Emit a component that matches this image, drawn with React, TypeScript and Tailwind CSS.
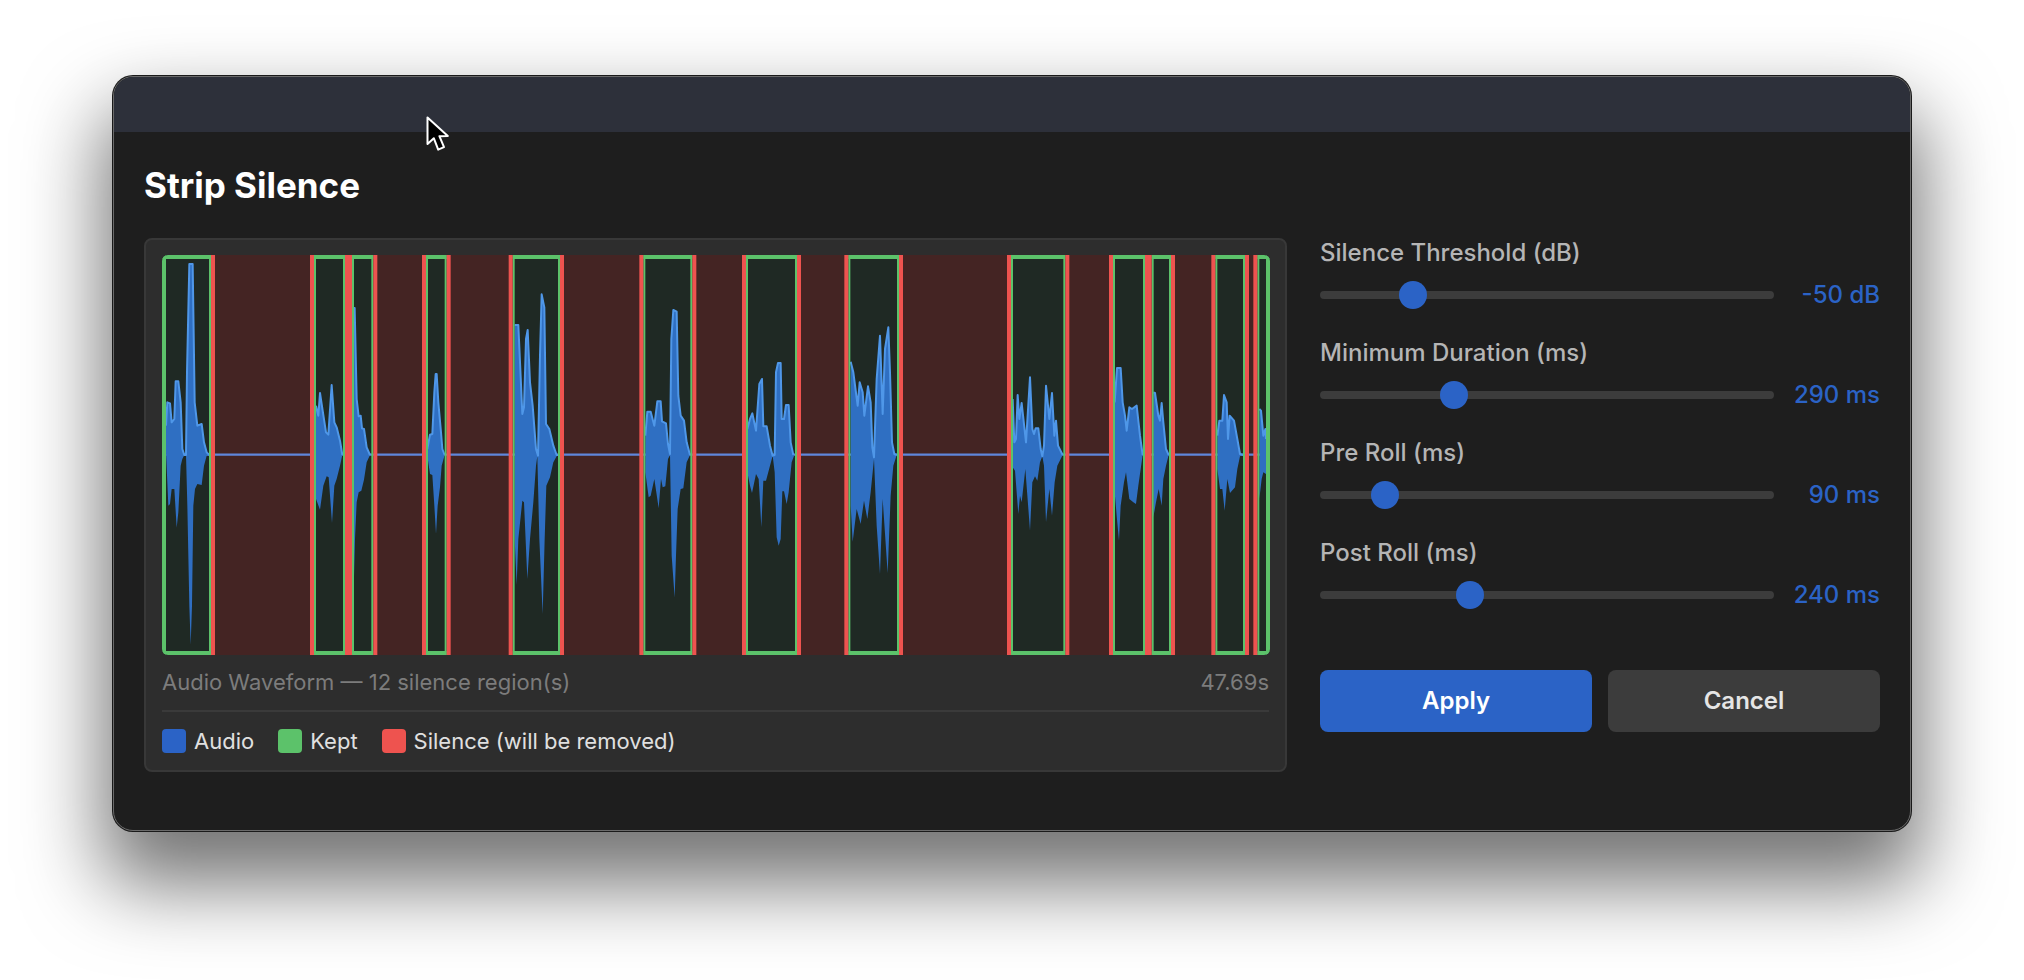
type Pt = [number, number];

interface Burst {
  top: Pt[];
  bottom: Pt[];
}

// waveform coordinates are in 1/3 px, the svg viewBox maps them back down
const kept: Pt[] = [
  [66, 213], [522, 615], [636, 700], [858, 920], [1118, 1260], [1510, 1657], [1818, 1971],
  [2125, 2277], [2613, 2776], [2919, 3015], [3035, 3093], [3226, 3315], [3352, 3390],
];

const silence: Pt[] = [
  [213, 522], [615, 636], [700, 858], [920, 1118], [1260, 1510], [1657, 1818],
  [1971, 2125], [2277, 2613], [2776, 2919], [3015, 3035], [3093, 3226], [3315, 3352],
];

const shift = (pts: Pt[], dx: number): Pt[] => pts.map(([x, y]) => [x + dx, y]);

const bursts: Burst[] = [
  {
    top: [[78, 560], [82, 490], [90, 493], [95, 550], [103, 540], [107, 427], [115, 427], [122, 490], [127, 630], [133, 648], [138, 648], [141, 400], [148, 75], [158, 75], [164, 490], [172, 560], [185, 555], [192, 610], [200, 640], [208, 648]],
    bottom: [[78, 640], [85, 800], [90, 795], [95, 750], [103, 750], [110, 866], [115, 820], [122, 680], [127, 660], [133, 648], [138, 648], [142, 800], [148, 1100], [152, 1218], [156, 1100], [160, 800], [165, 750], [172, 735], [185, 738], [192, 680], [200, 650], [208, 648]],
  },
  {
    top: [[528, 500], [535, 530], [540, 462], [548, 515], [558, 580], [565, 587], [575, 438], [583, 550], [590, 565], [600, 605], [607, 648]],
    bottom: [[528, 780], [540, 812], [550, 740], [560, 712], [566, 715], [576, 852], [583, 740], [590, 720], [600, 680], [607, 648]],
  },
  {
    top: [[638, 207], [644, 207], [650, 480], [656, 532], [662, 530], [666, 568], [672, 570], [680, 625], [690, 648]],
    bottom: [[640, 1090], [645, 900], [650, 790], [656, 760], [664, 755], [672, 722], [680, 670], [690, 648]],
  },
  {
    top: [[862, 630], [870, 587], [877, 585], [883, 460], [887, 405], [890, 405], [895, 490], [903, 580], [907, 630], [914, 648]],
    bottom: [[862, 650], [870, 705], [877, 708], [883, 800], [888, 885], [893, 800], [900, 745], [905, 680], [914, 648]],
  },
  {
    top: [[1124, 258], [1135, 258], [1147, 525], [1152, 505], [1158, 300], [1163, 273], [1170, 430], [1178, 500], [1188, 630], [1194, 650], [1200, 350], [1205, 166], [1213, 205], [1218, 555], [1228, 570], [1240, 620], [1250, 648], [1254, 648]],
    bottom: [[1124, 900], [1130, 1038], [1135, 900], [1147, 785], [1152, 790], [1162, 1020], [1170, 900], [1180, 790], [1188, 680], [1192, 652], [1198, 900], [1208, 1125], [1214, 900], [1219, 740], [1230, 715], [1240, 670], [1252, 648]],
  },
  {
    top: shift([[256, 590], [262, 518], [272, 518], [283, 560], [292, 487], [302, 487], [306, 547], [318, 553], [324, 615], [330, 645], [334, 300], [340, 213], [350, 218], [355, 470], [362, 530], [372, 545], [380, 610], [390, 648]], 1260),
    bottom: shift([[256, 700], [266, 775], [272, 770], [283, 720], [296, 808], [303, 720], [308, 745], [316, 742], [324, 660], [330, 648], [335, 950], [344, 1076], [348, 950], [353, 810], [362, 750], [370, 748], [380, 670], [390, 648]], 1260),
  },
  {
    top: shift([[562, 570], [570, 540], [577, 523], [588, 575], [598, 435], [606, 420], [610, 562], [620, 562], [630, 620], [638, 650], [644, 648], [648, 400], [654, 372], [662, 372], [665, 540], [672, 540], [678, 498], [686, 498], [692, 610], [700, 648]], 1260),
    bottom: shift([[562, 700], [570, 740], [576, 762], [588, 705], [596, 720], [604, 865], [610, 725], [618, 725], [630, 680], [638, 650], [644, 700], [650, 895], [656, 920], [662, 900], [667, 757], [672, 757], [680, 795], [686, 760], [695, 670], [703, 648]], 1260),
  },
  {
    top: shift([[872, 368], [880, 400], [893, 500], [899, 430], [908, 460], [913, 530], [924, 442], [932, 490], [937, 625], [942, 655], [950, 420], [960, 290], [968, 525], [975, 330], [985, 265], [990, 400], [996, 610], [1003, 645], [1010, 648]], 1260),
    bottom: shift([[872, 800], [878, 908], [890, 810], [902, 855], [912, 785], [922, 840], [932, 760], [942, 660], [950, 860], [960, 1005], [968, 780], [983, 1003], [992, 770], [1000, 680], [1010, 648]], 1260),
  },
  {
    top: shift([[278, 480], [283, 610], [288, 600], [293, 468], [298, 540], [305, 492], [318, 610], [330, 415], [337, 570], [342, 585], [347, 568], [355, 568], [362, 630], [367, 652], [372, 620], [378, 440], [388, 540], [396, 462], [403, 590], [408, 545], [414, 620], [428, 648]], 2340),
    bottom: shift([[278, 685], [285, 695], [295, 825], [300, 770], [305, 790], [316, 690], [330, 875], [337, 730], [345, 712], [352, 725], [360, 670], [367, 652], [372, 680], [378, 850], [388, 750], [396, 830], [404, 730], [412, 680], [428, 648]], 2340),
  },
  {
    top: shift([[584, 490], [591, 387], [602, 387], [608, 490], [615, 530], [620, 575], [628, 505], [636, 510], [650, 500], [660, 590], [668, 648]], 2340),
    bottom: shift([[584, 760], [590, 830], [597, 905], [602, 800], [612, 730], [618, 700], [628, 780], [640, 790], [648, 795], [655, 740], [668, 648]], 2340),
  },
  {
    top: shift([[700, 460], [705, 462], [715, 530], [720, 545], [725, 492], [730, 550], [738, 630], [746, 648]], 2340),
    bottom: shift([[700, 835], [708, 790], [716, 750], [725, 800], [730, 720], [738, 680], [746, 648]], 2340),
  },
  {
    top: shift([[892, 590], [898, 545], [907, 545], [912, 468], [920, 490], [924, 600], [929, 530], [942, 545], [952, 600], [960, 645], [970, 648]], 2340),
    bottom: shift([[892, 690], [900, 750], [907, 750], [914, 815], [922, 720], [930, 762], [945, 745], [952, 690], [960, 652], [970, 648]], 2340),
  },
  {
    top: shift([[1018, 510], [1023, 515], [1030, 590], [1036, 570], [1038, 600]], 2340),
    bottom: shift([[1018, 780], [1025, 720], [1030, 700], [1038, 705]], 2340),
  },
];

const sliders = [
  { label: 'Silence Threshold (dB)', value: '-50 dB', pos: 93 },
  { label: 'Minimum Duration (ms)', value: '290 ms', pos: 134 },
  { label: 'Pre Roll (ms)', value: '90 ms', pos: 65 },
  { label: 'Post Roll (ms)', value: '240 ms', pos: 150 },
];

const toPoints = (pts: Pt[]) => pts.map(([x, y]) => `${x},${y}`).join(' ');

function Waveform() {
  return (
    <div className="h-[400px] w-[1108px] overflow-hidden rounded-[6px]">
      <svg viewBox="66 48 3324 1200" width={1108} height={400} className="block">
        {silence.map(([a, b]) => (
          <rect key={a} x={a} y={48} width={b - a} height={1200} fill="#442423" />
        ))}
        {kept.map(([a, b]) => (
          <rect key={a} x={a} y={48} width={b - a} height={1200} fill="#1f2924" />
        ))}
        <line x1={66} x2={3390} y1={647} y2={647} stroke="#5f86dc" strokeWidth={7} />
        {bursts.map((b, i) => (
          <g key={i}>
            <polygon points={toPoints([...b.top, ...[...b.bottom].reverse()])} fill="#2f6fc2" />
            <polyline points={toPoints(b.top)} fill="none" stroke="#4f97e8" strokeWidth={6} strokeLinejoin="round" />
          </g>
        ))}
        {kept.map(([a, b], i) => {
          const left = i === 0 ? 12 : 6;
          const right = i === kept.length - 1 ? 12 : 6;
          return (
            <g key={a} fill="#5cc26a">
              <rect x={a} y={48} width={b - a} height={12} />
              <rect x={a} y={1236} width={b - a} height={12} />
              <rect x={a} y={48} width={left} height={1200} />
              <rect x={b - right} y={48} width={right} height={1200} />
            </g>
          );
        })}
        {silence.map(([a, b]) => (
          <g key={a} fill="#ee534f">
            <rect x={a} y={48} width={12} height={1200} />
            <rect x={b - 12} y={48} width={12} height={1200} />
          </g>
        ))}
      </svg>
    </div>
  );
}

function LegendItem({ color, label }: { color: string; label: string }) {
  return (
    <div className="flex items-center gap-2">
      <div className={`h-6 w-6 rounded ${color}`} />
      <span className="text-[22px] leading-6 text-[#e0e0e0]">{label}</span>
    </div>
  );
}

export default function App() {
  return (
    <div className="relative h-[980px] w-[2024px] overflow-hidden bg-white pl-[113px] pt-[76px] font-['Inter',sans-serif]">
      <div className="h-[755px] w-[1798px] overflow-hidden rounded-[20px] border border-[#6a6a6a] bg-[#1e1e1e] shadow-[0_0_0_1px_#1a1a1a,0_44px_80px_10px_rgba(0,0,0,0.55)]">
        <div className="h-[55px] bg-[#2d303a]" />

        <div className="px-[30px]">
          <h1 className="flex h-[106px] items-center text-[35px] font-bold leading-none text-white">Strip Silence</h1>

          <div className="flex gap-[33px]">
            <div className="h-[534px] w-[1143px] rounded-lg border-2 border-[#383838] bg-[#2d2d2d] px-4 pt-[15px]">
              <Waveform />
              <div className="mt-[12px] flex h-[30px] items-center justify-between text-[22px] text-[#7c7c7c]">
                <span>Audio Waveform — 12 silence region(s)</span>
                <span>47.69s</span>
              </div>
              <div className="mt-[13px] border-t-2 border-[#3a3a3a]" />
              <div className="mt-[17px] flex gap-6">
                <LegendItem color="bg-[#2b63c6]" label="Audio" />
                <LegendItem color="bg-[#5cc26a]" label="Kept" />
                <LegendItem color="bg-[#ee534f]" label="Silence (will be removed)" />
              </div>
            </div>

            <div className="w-[560px]">
              {sliders.map((s) => (
                <div key={s.label} className="h-[100px]">
                  <div className="h-[30px] text-[24px] font-medium leading-[30px] text-[#b5b5b5]">{s.label}</div>
                  <div className="flex h-[54px] items-center">
                    <div className="relative h-2 w-[454px] rounded-full bg-[#3c3c3c]">
                      <div
                        className="absolute top-[-10px] h-7 w-7 -translate-x-1/2 rounded-full bg-[#2b63c6]"
                        style={{ left: s.pos }}
                      />
                    </div>
                    <div className="flex-1 text-right text-[24px] font-medium text-[#2b63c6]">{s.value}</div>
                  </div>
                </div>
              ))}
              <div className="mt-8 flex gap-4">
                <button className="h-[62px] flex-1 rounded-lg bg-[#2b63c6] text-[24px] font-semibold text-white">Apply</button>
                <button className="h-[62px] flex-1 rounded-lg bg-[#3c3c3c] text-[24px] font-semibold text-[#e5e5e5]">Cancel</button>
              </div>
            </div>
          </div>
        </div>
      </div>

      {/* mouse pointer from the capture */}
      <svg className="absolute left-[425px] top-[115px]" width={26} height={40} viewBox="0 0 26 40">
        <path
          d="M2.5 2.5 L2.5 29 L8.8 23.2 L13.2 34.6 L19 32.2 L14.4 21.2 L22.8 21 Z"
          fill="#000"
          stroke="#fff"
          strokeWidth={2}
          strokeLinejoin="round"
        />
      </svg>
    </div>
  );
}
